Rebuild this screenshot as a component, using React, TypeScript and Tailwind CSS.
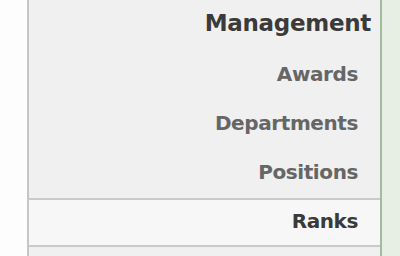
import React from "react";

const items = [
	{ name: "Awards", active: false },
	{ name: "Departments", active: false },
	{ name: "Positions", active: false },
	{ name: "Ranks", active: true },
];

const SideMenu = () => {
	return (
		<div className="flex h-[256px] w-[355px] flex-col border-l-2 border-r-2 border-l-[#c6c6c6] border-r-[#a3bb9c] bg-[#f0f0f0]">
			<div className="flex h-[51px] shrink-0 items-center justify-end pb-[4px] pr-[9px] text-[23px] font-bold tracking-[-0.3px] text-[#3a3a3a]">
				Management
			</div>
			{items.map((item) => (
				<div
					key={item.name}
					className={
						item.active
							? "flex h-[49px] shrink-0 items-center justify-end border-y-2 border-[#cacaca] bg-[#f7f7f7] pb-[4px] pr-[22px] text-[20px] font-bold tracking-[-0.4px] text-[#3a3a3a]"
							: "flex h-[49px] shrink-0 items-center justify-end pb-[4px] pr-[22px] text-[20px] font-bold tracking-[-0.4px] text-[#666666]"
					}
				>
					{item.name}
				</div>
			))}
		</div>
	);
};

export default function App() {
	return (
		<div className="flex h-[256px] w-[400px] overflow-hidden bg-[#fdfdfd] font-['DejaVu_Sans',sans-serif]">
			<div className="w-[27px] shrink-0" />
			<SideMenu />
			<div className="flex-1 bg-[#e7eee4]" />
		</div>
	);
}
